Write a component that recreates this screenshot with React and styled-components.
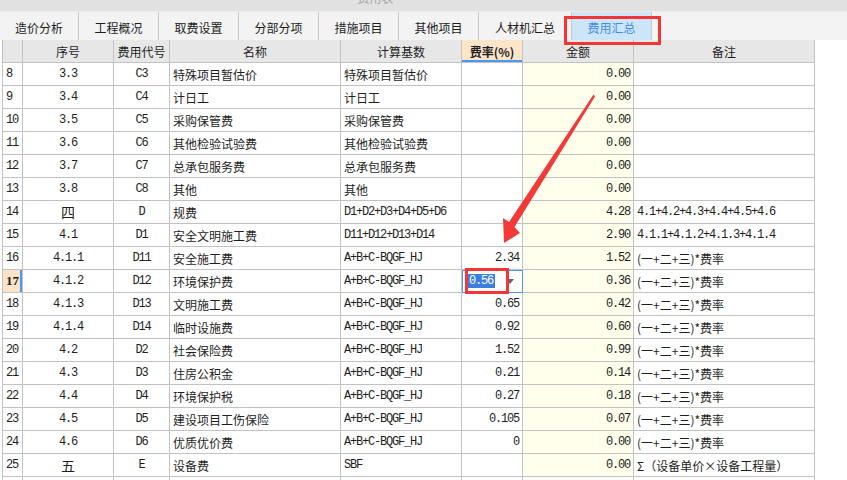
import React from "react";
import styled, { createGlobalStyle, css } from "styled-components";

const Global = createGlobalStyle`
  html, body { margin: 0; padding: 0; background: #fff; }
  body { font-family: "Noto Sans CJK SC", "Noto Sans", sans-serif; }
`;

const Page = styled.div`
  position: relative;
  width: 847px;
  height: 480px;
  overflow: hidden;
  background: #fff;
`;

const TitleBar = styled.div`
  height: 12px;
  background: #e1e1e1;
  display: flex;
  justify-content: center;
  overflow: hidden;
  border-bottom: 1px solid #ececec;
  box-sizing: border-box;
`;

const TitleText = styled.span`
  margin-top: -8px;
  margin-left: -96px;
  font-size: 12px;
  line-height: 12px;
  color: #a8a8a8;
`;

const TabBar = styled.div`
  height: 28px;
  display: flex;
  background: #f3f3f3;
  box-sizing: border-box;
`;

const Tab = styled.div`
  width: ${(p) => p.$w}px;
  flex: none;
  box-sizing: border-box;
  border-right: 1px solid #c9c9c9;
  display: flex;
  align-items: center;
  justify-content: center;
  font-size: 12px;
  color: #1c1c1c;
  padding-top: 2px;
  ${(p) =>
    p.$active &&
    css`
      background: #cce5f8;
      color: #3d8fe8;
    `}
`;

const Table = styled.table`
  margin-left: 2px;
  border-collapse: collapse;
  table-layout: fixed;
  width: 813px;
`;

const Th = styled.th`
  height: 22px;
  padding: 0;
  font-weight: ${(p) => (p.$hl ? 700 : 400)};
  font-size: 12px;
  color: #1e1e1e;
  background: ${(p) => (p.$hl ? "#fde5ca" : "#e7e7e7")};
  border: 1px solid #c2c2c2;
  border-top: none;
  ${(p) => p.$hl && css`box-shadow: inset 0 -2px 0 #4a98f2;`}
  text-align: center;
  white-space: nowrap;
`;

const mono = css`
  font-family: "Liberation Mono", "DejaVu Sans Mono", monospace;
  font-size: 12px;
  letter-spacing: -1.2px;
`;

const Td = styled.td`
  height: 22px;
  padding: 0 3px;
  border: 1px solid #c2c2c2;
  font-size: 12px;
  color: #1e1e1e;
  white-space: nowrap;
  overflow: hidden;
  text-align: ${(p) => p.$align || "left"};
  background: ${(p) => p.$bg || "transparent"};
  ${(p) => p.$mono && mono}
  ${(p) =>
    p.$big &&
    css`
      font-size: 14px;
    `}
`;

const RowNo = styled(Td)`
  padding-left: 3px;
  ${mono}
  ${(p) =>
    p.$current &&
    css`
      background: #fde4c6;
      font-weight: 700;
      font-family: "Liberation Serif", serif;
      font-size: 13px;
      letter-spacing: 0;
      box-shadow: inset -2px 0 0 #4a98f2;
    `}
`;

const EditCell = styled(Td)`
  outline: 1px solid #4a98f2;
  outline-offset: -1px;
  padding: 0 4px 0 6px;
`;

const EditInner = styled.div`
  display: flex;
  align-items: center;
  justify-content: space-between;
`;

const Selected = styled.span`
  background: #3a7fe0;
  color: #fff;
  ${mono}
  line-height: 14px;
  padding: 0 2px 0 1px;
`;

const Caret = styled.span`
  width: 0;
  height: 0;
  border-left: 4px solid transparent;
  border-right: 4px solid transparent;
  border-top: 5px solid #666;
  margin-right: 4px;
`;

const RedBox = styled.div`
  position: absolute;
  left: ${(p) => p.$x}px;
  top: ${(p) => p.$y}px;
  width: ${(p) => p.$w}px;
  height: ${(p) => p.$h}px;
  box-sizing: border-box;
  border: 3px solid #f23535;
  pointer-events: none;
`;

const ArrowSvg = styled.svg`
  position: absolute;
  left: 0;
  top: 0;
  pointer-events: none;
`;

const tabs = [
  ["造价分析", 79],
  ["工程概况", 80],
  ["取费设置", 80],
  ["分部分项", 80],
  ["措施项目", 80],
  ["其他项目", 80],
  ["人材机汇总", 93],
  ["费用汇总", 80, true],
];

const F = "A+B+C-BQGF_HJ";
const R = "(一+二+三)*费率";

const rows = [
  [8, "3.3", "C3", "特殊项目暂估价", "特殊项目暂估价", false, "", "0.00", ""],
  [9, "3.4", "C4", "计日工", "计日工", false, "", "0.00", ""],
  [10, "3.5", "C5", "采购保管费", "采购保管费", false, "", "0.00", ""],
  [11, "3.6", "C6", "其他检验试验费", "其他检验试验费", false, "", "0.00", ""],
  [12, "3.7", "C7", "总承包服务费", "总承包服务费", false, "", "0.00", ""],
  [13, "3.8", "C8", "其他", "其他", false, "", "0.00", ""],
  [14, "四", "D", "规费", "D1+D2+D3+D4+D5+D6", true, "", "4.28", "4.1+4.2+4.3+4.4+4.5+4.6", true],
  [15, "4.1", "D1", "安全文明施工费", "D11+D12+D13+D14", true, "", "2.90", "4.1.1+4.1.2+4.1.3+4.1.4", true],
  [16, "4.1.1", "D11", "安全施工费", F, true, "2.34", "1.52", R],
  [17, "4.1.2", "D12", "环境保护费", F, true, "0.56", "0.36", R],
  [18, "4.1.3", "D13", "文明施工费", F, true, "0.65", "0.42", R],
  [19, "4.1.4", "D14", "临时设施费", F, true, "0.92", "0.60", R],
  [20, "4.2", "D2", "社会保险费", F, true, "1.52", "0.99", R],
  [21, "4.3", "D3", "住房公积金", F, true, "0.21", "0.14", R],
  [22, "4.4", "D4", "环境保护税", F, true, "0.27", "0.18", R],
  [23, "4.5", "D5", "建设项目工伤保险", F, true, "0.105", "0.07", R],
  [24, "4.6", "D6", "优质优价费", F, true, "0", "0.00", R],
  [25, "五", "E", "设备费", "SBF", true, "", "0.00", "Σ（设备单价×设备工程量）"],
  [26, "", "", "", "", false, "", "", ""],
];

const widths = [20, 91, 56, 171, 121, 61, 111, 181];
const YELLOW = "#ffffeb";

export default function App() {
  return (
    <Page>
      <Global />
      <TitleBar>
        <TitleText>费用表</TitleText>
      </TitleBar>
      <TabBar>
        {tabs.map(([t, w, a]) => (
          <Tab key={t} $w={w} $active={a}>
            {t}
          </Tab>
        ))}
      </TabBar>
      <Table>
        <colgroup>
          {widths.map((w, i) => (
            <col key={i} style={{ width: w }} />
          ))}
        </colgroup>
        <thead>
          <tr>
            <Th></Th>
            <Th>序号</Th>
            <Th>费用代号</Th>
            <Th>名称</Th>
            <Th>计算基数</Th>
            <Th $hl>费率(%)</Th>
            <Th>金额</Th>
            <Th>备注</Th>
          </tr>
        </thead>
        <tbody>
          {rows.map(([n, seq, code, name, base, baseMono, rate, amt, note, noteMono]) => {
            const cur = n === 17;
            const chinese = /[一-龥]/.test(seq);
            return (
              <tr key={n}>
                <RowNo $current={cur}>{n === 26 ? "" : n}</RowNo>
                <Td $align="center" $mono={!chinese} $big={chinese}>
                  {seq}
                </Td>
                <Td $align="center" $mono>
                  {code}
                </Td>
                <Td>{name}</Td>
                <Td $mono={baseMono}>{base}</Td>
                {cur ? (
                  <EditCell>
                    <EditInner>
                      <Selected>{rate}</Selected>
                      <Caret />
                    </EditInner>
                  </EditCell>
                ) : (
                  <Td $align="right" $mono>
                    {rate}
                  </Td>
                )}
                <Td $align="right" $mono $bg={n === 26 ? "transparent" : YELLOW}>
                  {amt}
                </Td>
                <Td $mono={noteMono}>{note}</Td>
              </tr>
            );
          })}
        </tbody>
      </Table>

      <RedBox $x={564} $y={16} $w={97} $h={29} />
      <RedBox $x={465} $y={268} $w={44} $h={26} />

      <ArrowSvg width="847" height="480" viewBox="0 0 847 480">
        <polygon
          fill="#f23a3a"
          points="594,95 595,96.5 514.5,227 520,233 504,243 503,218 509,222 593.5,94.6"
        />
      </ArrowSvg>
    </Page>
  );
}
